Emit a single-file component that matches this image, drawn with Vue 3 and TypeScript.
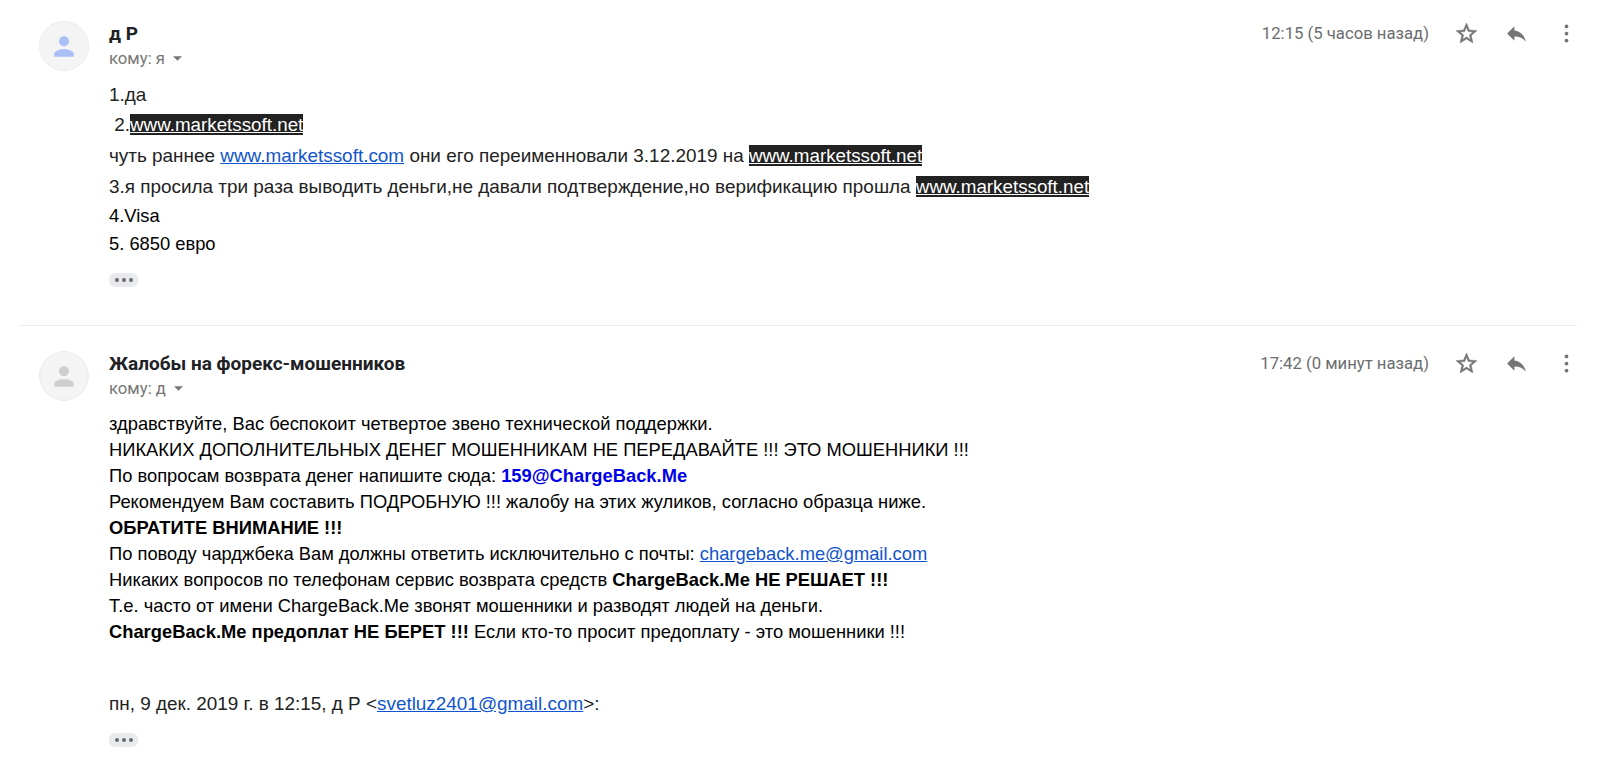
<script setup lang="ts">
type Kind = 'text' | 'bold' | 'link' | 'marked' | 'address';

interface Segment {
  kind: Kind;
  text: string;
}

interface Message {
  id: string;
  sender: string;
  recipient: string;
  time: string;
  lines: Segment[][];
  quote?: Segment[];
}

const text = (value: string): Segment => ({ kind: 'text', text: value });
const bold = (value: string): Segment => ({ kind: 'bold', text: value });
const link = (value: string): Segment => ({ kind: 'link', text: value });
const marked = (value: string): Segment => ({ kind: 'marked', text: value });
const address = (value: string): Segment => ({ kind: 'address', text: value });

const messages: Message[] = [
  {
    id: 'question',
    sender: 'д Р',
    recipient: 'кому: я',
    time: '12:15 (5 часов назад)',
    lines: [
      [text('1.да')],
      [text(' 2.'), marked('www.marketssoft.net')],
      [
        text('чуть раннее '),
        link('www.marketssoft.com'),
        text(' они его переименновали 3.12.2019 на '),
        marked('www.marketssoft.net'),
      ],
      [
        text('3.я просила три раза выводить деньги,не давали подтверждение,но верификацию прошла '),
        marked('www.marketssoft.net'),
      ],
      [text('4.Visa')],
      [text('5. 6850 евро')],
    ],
  },
  {
    id: 'answer',
    sender: 'Жалобы на форекс-мошенников',
    recipient: 'кому: д',
    time: '17:42 (0 минут назад)',
    lines: [
      [text('здравствуйте, Вас беспокоит четвертое звено технической поддержки.')],
      [text('НИКАКИХ ДОПОЛНИТЕЛЬНЫХ ДЕНЕГ МОШЕННИКАМ НЕ ПЕРЕДАВАЙТЕ !!! ЭТО МОШЕННИКИ !!!')],
      [text('По вопросам возврата денег напишите сюда: '), address('159@ChargeBack.Me')],
      [text('Рекомендуем Вам составить ПОДРОБНУЮ !!! жалобу на этих жуликов, согласно образца ниже.')],
      [bold('ОБРАТИТЕ ВНИМАНИЕ !!!')],
      [
        text('По поводу чарджбека Вам должны ответить исключительно с почты: '),
        link('chargeback.me@gmail.com'),
      ],
      [
        text('Никаких вопросов по телефонам сервис возврата средств '),
        bold('ChargeBack.Me НЕ РЕШАЕТ !!!'),
      ],
      [text('Т.е. часто от имени ChargeBack.Me звонят мошенники и разводят людей на деньги.')],
      [
        bold('ChargeBack.Me предоплат НЕ БЕРЕТ !!!'),
        text(' Если кто-то просит предоплату - это мошенники !!!'),
      ],
    ],
    quote: [text('пн, 9 дек. 2019 г. в 12:15, д Р <'), link('svetluz2401@gmail.com'), text('>:')],
  },
];
</script>

<template>
  <main class="thread">
    <article v-for="message in messages" :key="message.id" :class="['message', `message--${message.id}`]">
      <div class="avatar">
        <svg class="avatar__icon" viewBox="0 0 20 21">
          <circle cx="10" cy="5.3" r="5" />
          <path d="M.2 20.7v-2.2c0-3.6 5.2-5.2 9.8-5.2s9.8 1.6 9.8 5.2v2.2z" />
        </svg>
      </div>

      <div class="message__content">
        <header class="header">
          <div class="header__who">
            <div class="header__sender">{{ message.sender }}</div>
            <div class="header__recipient">
              {{ message.recipient }}
              <svg class="header__caret" viewBox="0 0 10 5"><path d="M0 0h10L5 5z" /></svg>
            </div>
          </div>
          <div class="header__tools">
            <span class="header__time">{{ message.time }}</span>
            <svg class="icon icon--star" viewBox="0 0 24 24">
              <path
                d="M22 9.24l-7.19-.62L12 2 9.19 8.63 2 9.24l5.46 4.73L5.82 21 12 17.27 18.18 21l-1.63-7.03L22 9.24zM12 15.4l-3.76 2.27 1-4.28-3.32-2.88 4.38-.38L12 6.1l1.71 4.04 4.38.38-3.32 2.88 1 4.28L12 15.4z"
              />
            </svg>
            <svg class="icon" viewBox="0 0 24 24">
              <path d="M10 9V5l-7 7 7 7v-4.1c5 0 8.5 1.6 11 5.1-1-5-4-10-11-11z" />
            </svg>
            <svg class="icon icon--more" viewBox="0 0 24 24">
              <circle cx="12" cy="5.2" r="1.8" />
              <circle cx="12" cy="12" r="1.8" />
              <circle cx="12" cy="18.8" r="1.8" />
            </svg>
          </div>
        </header>

        <div class="body">
          <p v-for="(line, index) in message.lines" :key="index" class="line">
            <span v-for="(part, i) in line" :key="i" :class="`part--${part.kind}`">{{ part.text }}</span>
          </p>
          <p v-if="message.quote" class="line line--quote">
            <span v-for="(part, i) in message.quote" :key="i" :class="`part--${part.kind}`">{{ part.text }}</span>
          </p>
        </div>

        <div class="ellipsis"><i /><i /><i /></div>
      </div>
    </article>
  </main>
</template>

<style>
body {
  margin: 0;
  background: #fff;
}
</style>

<style scoped>
.thread {
  box-sizing: border-box;
  height: 777px;
  padding: 0 20px 0 18px;
  overflow: hidden;
}

.message {
  box-sizing: border-box;
  display: flex;
  gap: 20px;
  padding: 21px 0 0 21px;
}

.message--question {
  height: 325px;
}

.message--answer {
  padding-top: 25px;
  border-top: 1px solid #eceded;
}

.avatar {
  box-sizing: border-box;
  display: flex;
  flex: none;
  justify-content: center;
  width: 50px;
  height: 50px;
  padding-top: 14px;
  border: 1px solid #ececec;
  border-radius: 50%;
  background: #f4f4f4;
}

.avatar__icon {
  width: 20px;
  height: 21px;
  fill: #a8c0f6;
}

.message--answer .avatar__icon {
  fill: #cfcfcf;
}

.message__content {
  flex: 1;
  min-width: 0;
}

.header {
  display: flex;
  justify-content: space-between;
  height: 59px;
  font-family: Roboto, sans-serif;
}

.message--answer .header {
  height: 60px;
}

.header__sender {
  height: 25px;
  color: #202124;
  font-size: 19px;
  font-weight: 700;
  line-height: 25px;
  white-space: nowrap;
}

.header__recipient {
  display: flex;
  align-items: center;
  gap: 8px;
  color: #777;
  font-size: 16.7px;
  line-height: 25px;
}

.header__caret {
  width: 9px;
  height: 5px;
  fill: #777;
}

.header__tools {
  display: flex;
  align-items: center;
  height: 25px;
}

.header__time {
  margin-right: 25px;
  color: #6b6d70;
  font-size: 16.7px;
  white-space: nowrap;
}

.icon {
  width: 25px;
  height: 25px;
  margin-right: 25px;
  fill: #757575;
}

.icon--star {
  stroke: #757575;
  stroke-width: 0.5;
}

.icon--more {
  margin-right: -2px;
}

.body {
  color: #000;
  font-family: 'Liberation Sans', Arial, sans-serif;
  font-size: 18.33px;
}

.line {
  height: 26px;
  margin: 0;
  line-height: 26px;
  white-space: pre;
}

.message--question .line {
  height: 30px;
  color: #222;
  font-size: 18.92px;
  line-height: 30px;
}

.message--question .line:nth-child(3) {
  height: 32px;
  line-height: 32px;
}

.message--question .line:nth-child(n + 5) {
  height: 28px;
  color: #000;
  font-size: 18.33px;
  line-height: 28px;
}

.line--quote {
  padding-top: 46px;
  color: #222;
  font-size: 18.92px;
}

.part--bold {
  font-weight: 700;
}

.part--address {
  color: #0000e6;
  font-weight: 700;
}

.part--link {
  color: #15c;
  text-decoration: underline;
}

.part--marked {
  background: #222;
  color: #fff;
  font-size: 18.8px;
  text-decoration: underline;
}

.ellipsis {
  display: flex;
  align-items: center;
  justify-content: center;
  gap: 3px;
  width: 29px;
  height: 14px;
  margin-top: 15px;
  border-radius: 6px;
  background: #e8eaed;
}

.message--answer .ellipsis {
  margin-top: 16px;
}

.ellipsis i {
  width: 4px;
  height: 4px;
  border-radius: 50%;
  background: #66696d;
}
</style>
